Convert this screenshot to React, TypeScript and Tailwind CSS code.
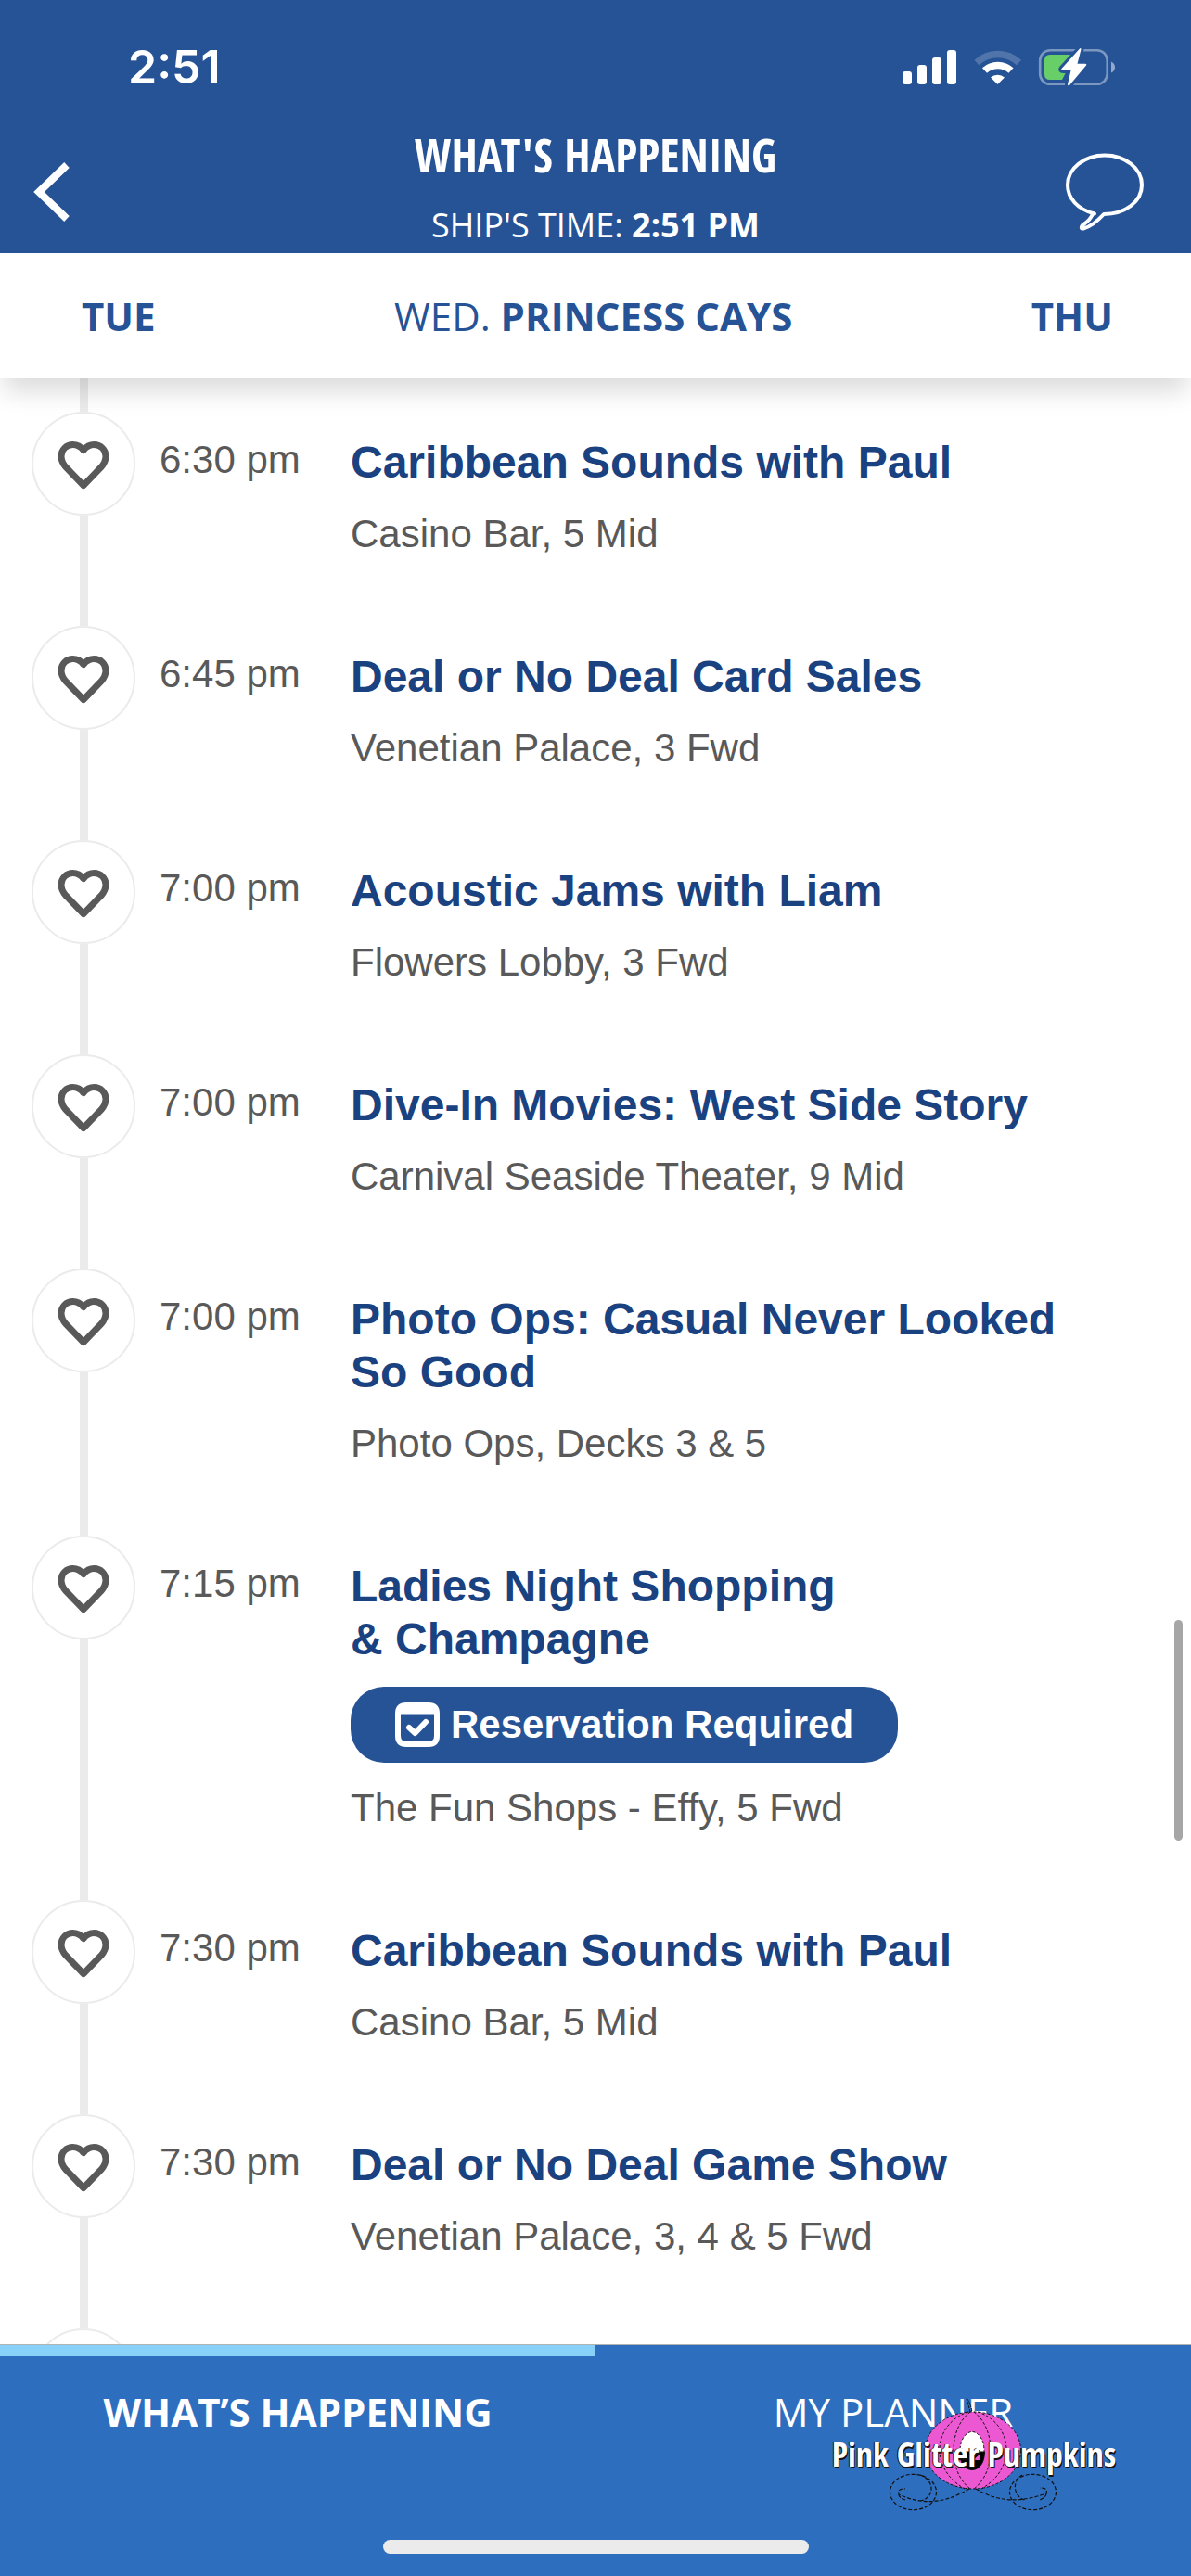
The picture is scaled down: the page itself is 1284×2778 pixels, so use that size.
import { useState } from "react";

interface ShipEvent {
  id: string;
  time: string;
  title: string;
  location: string;
  reservation?: boolean;
}

const EVENTS: ShipEvent[] = [
  { id: "1", time: "6:30 pm", title: "Caribbean Sounds with Paul", location: "Casino Bar, 5 Mid" },
  { id: "2", time: "6:45 pm", title: "Deal or No Deal Card Sales", location: "Venetian Palace, 3 Fwd" },
  { id: "3", time: "7:00 pm", title: "Acoustic Jams with Liam", location: "Flowers Lobby, 3 Fwd" },
  { id: "4", time: "7:00 pm", title: "Dive-In Movies: West Side Story", location: "Carnival Seaside Theater, 9 Mid" },
  { id: "5", time: "7:00 pm", title: "Photo Ops: Casual Never Looked So Good", location: "Photo Ops, Decks 3 & 5" },
  {
    id: "6",
    time: "7:15 pm",
    title: "Ladies Night Shopping &\u00a0Champagne",
    location: "The Fun Shops - Effy, 5 Fwd",
    reservation: true,
  },
  { id: "7", time: "7:30 pm", title: "Caribbean Sounds with Paul", location: "Casino Bar, 5 Mid" },
  { id: "8", time: "7:30 pm", title: "Deal or No Deal Game Show", location: "Venetian Palace, 3, 4 & 5 Fwd" },
];

function StatusIcons() {
  return (
    <svg width="230" height="42" viewBox="972 51 230 42" fill="none" aria-hidden="true">
      <g fill="#fff">
        <rect x="973" y="77" width="10" height="14" rx="3" />
        <rect x="989" y="70" width="10" height="21" rx="3" />
        <rect x="1005" y="62" width="10" height="29" rx="3" />
        <rect x="1021" y="54" width="10" height="37" rx="3" />
      </g>
      <path d="M1053 67.5a33 33 0 0 1 45.5 0" stroke="#fff" strokeOpacity="0.2" strokeWidth="7.5" />
      <path d="M1061.5 76a21 21 0 0 1 28.5 0" stroke="#fff" strokeWidth="7.5" />
      <path d="M1068 83.5a11.5 11.5 0 0 1 15 0L1075.5 91z" fill="#fff" />
      <rect x="1121.2" y="54.2" width="72.5" height="36.6" rx="11" stroke="#fff" strokeOpacity="0.4" strokeWidth="2.6" />
      <path d="M1198 66.5q4 2 4 6t-4 6z" fill="#fff" fillOpacity="0.5" />
      <path d="M1132 59h27l-14 27h-13q-6 0-6-6V65q0-6 6-6z" fill="#68cf68" />
      <path
        d="M1164 52.5 1144.5 74q-1 2 1.500 2h8.500l-3.500 15q0 2 2 1l18-21.500q1-1.800-1-1.800h-8.500l4-15.500q0-2-1.500-.7z"
        fill="#fff"
        stroke="#265396"
        strokeWidth="6"
        paintOrder="stroke"
      />
    </svg>
  );
}

function HeartButton({ label }: { label: string }) {
  const [saved, setSaved] = useState(false);

  return (
    <button
      type="button"
      aria-label={`Save ${label}`}
      aria-pressed={saved}
      onClick={() => setSaved(!saved)}
      className="flex size-28 shrink-0 items-center justify-center rounded-full border-2 border-[#ebebeb] bg-white"
    >
      <svg width="56" height="52" viewBox="0 0 56 52" className="mt-1" aria-hidden="true">
        <path
          d="M28 9.5C24.5 5 20.5 3.5 16.5 3.5 9.5 3.5 4 9 4 16c0 5 2 8.500 5 11.800L28 47.500l19-19.700c3-3.300 5-6.800 5-11.800C52 9 46.500 3.500 39.500 3.500 35.500 3.500 31.500 5 28 9.500z"
          fill={saved ? "#595959" : "none"}
          stroke="#595959"
          strokeWidth="7"
          strokeLinejoin="round"
        />
      </svg>
    </button>
  );
}

function ReservationBadge() {
  return (
    <div className="flex h-[82px] items-center gap-3 self-start rounded-[36px] bg-[#265396] px-12 text-[42px] leading-[52px] font-bold text-white">
      <svg width="48" height="48" viewBox="0 0 48 48" aria-hidden="true">
        <path
          fill="#fff"
          fillRule="evenodd"
          d="M12 0h24q12 0 12 12v24q0 12-12 12H12Q0 48 0 36V12Q0 0 12 0zM6 12.5V36q0 6 6 6h24q6 0 6-6V12.5z"
        />
        <path d="M15 27l6.500 6L33 21" fill="none" stroke="#fff" strokeWidth="6" strokeLinecap="round" strokeLinejoin="round" />
      </svg>
      Reservation Required
    </div>
  );
}

function EventRow({ event }: { event: ShipEvent }) {
  return (
    <li className="flex pr-[90px] pl-[34px]">
      <div className="flex w-28 shrink-0 flex-col">
        <HeartButton label={event.title} />
        <div className="ml-[52px] w-[9px] flex-1 bg-[#ebebeb]" />
      </div>
      <time className="w-[232px] shrink-0 pt-[26px] pl-[26px] text-[42px] leading-[52px] text-[#595959]">{event.time}</time>
      <div className="flex flex-1 flex-col gap-[23px] pt-[26px] pb-[73px]">
        <h2 className="text-[48px] leading-[57px] font-bold text-[#1a4180]">{event.title}</h2>
        {event.reservation && <ReservationBadge />}
        <p className="text-[42px] leading-[52px] text-[#595959]">{event.location}</p>
      </div>
    </li>
  );
}

function PumpkinLogo() {
  return (
    <div className="pointer-events-none absolute top-14 right-[80px] flex h-[124px] w-[308px] items-center justify-center">
      <svg className="absolute inset-0" width="308" height="124" viewBox="896 2584 308 124" fill="none" stroke="#111" aria-hidden="true">
        <path d="M1046 2600l-4-15q4 4 6 15" fill="#2e6ebe" strokeDasharray="3 1" />
        <ellipse cx="1049" cy="2641.5" rx="51.5" ry="41.5" fill="#ec57d2" strokeDasharray="3 2" />
        <path
          d="M1044 2600c-37 12-44 60-4 83M1046 2600c-24 18-24 65 0 83M1050 2600c24 18 24 65 0 83M1054 2600c37 12 44 60 4 83"
          strokeDasharray="3 2"
        />
        <ellipse cx="1048" cy="2642" rx="13" ry="20.5" fill="#fff" strokeDasharray="3 2" />
        <path d="M1034.5 2643h27c0 26-27 26-27 0z" fill="#000" />
        <path d="M1049 2652l8-7v7z" fill="#ec57d2" stroke="none" />
        <g strokeWidth="1.2" strokeDasharray="4 2">
          <ellipse cx="984.5" cy="2686.5" rx="25" ry="19.2" />
          <ellipse cx="1113.5" cy="2686.5" rx="25" ry="19.2" />
          <path d="M1045 2683c-27 16-50 18-76 6-2-6 4-6 7-6M992 2668c18 7 14 26 0 28M969 2689q0 4 7 6" />
          <path d="M1052 2683c27 16 50 14 76 5 2-6-4-6-7-6M1102 2668c-12 7-9 24 3 27M1128 2688q0 4-7 7" />
        </g>
      </svg>
      <span className="relative font-['Open_Sans_Condensed','Liberation_Sans_Narrow','Liberation_Sans',sans-serif] text-[36px] leading-none font-bold whitespace-nowrap text-white [text-shadow:1px_2px_0_#111,-1px_0_0_#111]">
        Pink Glitter Pumpkins
      </span>
    </div>
  );
}

export default function App() {
  return (
    <div className="flex h-screen w-full flex-col overflow-hidden bg-white font-['Liberation_Sans',Arial,sans-serif]">
      <header className="shrink-0 bg-[#265396] text-white">
        <div className="flex h-32 items-center justify-between pt-4 pr-[82px] pl-[138px]">
          <span className="font-['Inter',sans-serif] text-[50px] leading-none font-semibold">2:51</span>
          <StatusIcons />
        </div>
        <div className="flex h-[145px] items-center justify-between pt-3 pr-[50px] pl-9 font-['Open_Sans',sans-serif]">
          <button type="button" aria-label="Back" className="flex w-[100px]">
            <svg width="40" height="64" viewBox="0 0 40 64" fill="none" aria-hidden="true">
              <path d="M36 3L6 32l30 29" stroke="#fff" strokeWidth="8" />
            </svg>
          </button>
          <div className="flex flex-col items-center gap-5 pb-3">
            <h1 className="font-['Open_Sans_Condensed','Liberation_Sans_Narrow','Liberation_Sans',sans-serif] text-[50px] leading-[64px] font-bold">
              WHAT'S HAPPENING
            </h1>
            <p className="text-[36px] leading-[48px]">
              SHIP'S TIME: <span className="font-bold">2:51 PM</span>
            </p>
          </div>
          <button type="button" aria-label="Chat" className="flex w-[86px] justify-end">
            <svg width="86" height="84" viewBox="0 0 86 84" fill="none" aria-hidden="true">
              <path
                d="M32 65.5C14 61 3 49 3 34.5 3 16.5 21 2.500 43 2.500s40 14 40 32-18 31.500-41 31.500C36 72.500 28 79.500 20 81.500c-3 .5-2.500-2-1-3.500 5-3.500 9.500-7.500 11-12.500z"
                stroke="#fff"
                strokeWidth="4"
                strokeLinejoin="round"
              />
            </svg>
          </button>
        </div>
      </header>

      <nav className="relative z-10 flex h-[135px] shrink-0 items-center justify-between bg-white pr-[84px] pl-[88px] font-['Open_Sans',sans-serif] text-[42px] leading-[56px] text-[#265396] shadow-[0_18px_25px_-4px_rgba(0,0,0,0.14)]">
        <button type="button" className="font-bold">TUE</button>
        <button type="button">
          WED. <span className="font-bold">PRINCESS CAYS</span>
        </button>
        <button type="button" className="font-bold">THU</button>
      </nav>

      <main className="relative min-h-0 flex-1 overflow-hidden">
        <div className="ml-[86px] h-9 w-[9px] bg-[#ebebeb]" />
        <ul>
          {EVENTS.map((event) => (
            <EventRow key={event.id} event={event} />
          ))}
        </ul>
        <div className="ml-[34px]">
          <HeartButton label="next event" />
        </div>
        <div className="absolute top-[1339px] right-[9px] h-[238px] w-[9px] rounded-full bg-[#a6a6a6]" />
      </main>

      <footer className="relative flex h-[250px] shrink-0 flex-col items-center justify-between border-t border-[#b3b3b3] bg-[#2e6ebe] pb-6 font-['Open_Sans',sans-serif] text-[42px] leading-[56px] text-white">
        <div className="grid w-full grid-cols-2">
          <button type="button" className="border-t-12 border-[#88d2fa] pt-8 font-bold">WHAT’S HAPPENING</button>
          <button type="button" className="border-t-12 border-transparent pt-8">MY PLANNER</button>
        </div>
        <div className="h-[15px] w-[459px] rounded-full bg-[#ebebeb]" />
        <PumpkinLogo />
      </footer>
    </div>
  );
}
